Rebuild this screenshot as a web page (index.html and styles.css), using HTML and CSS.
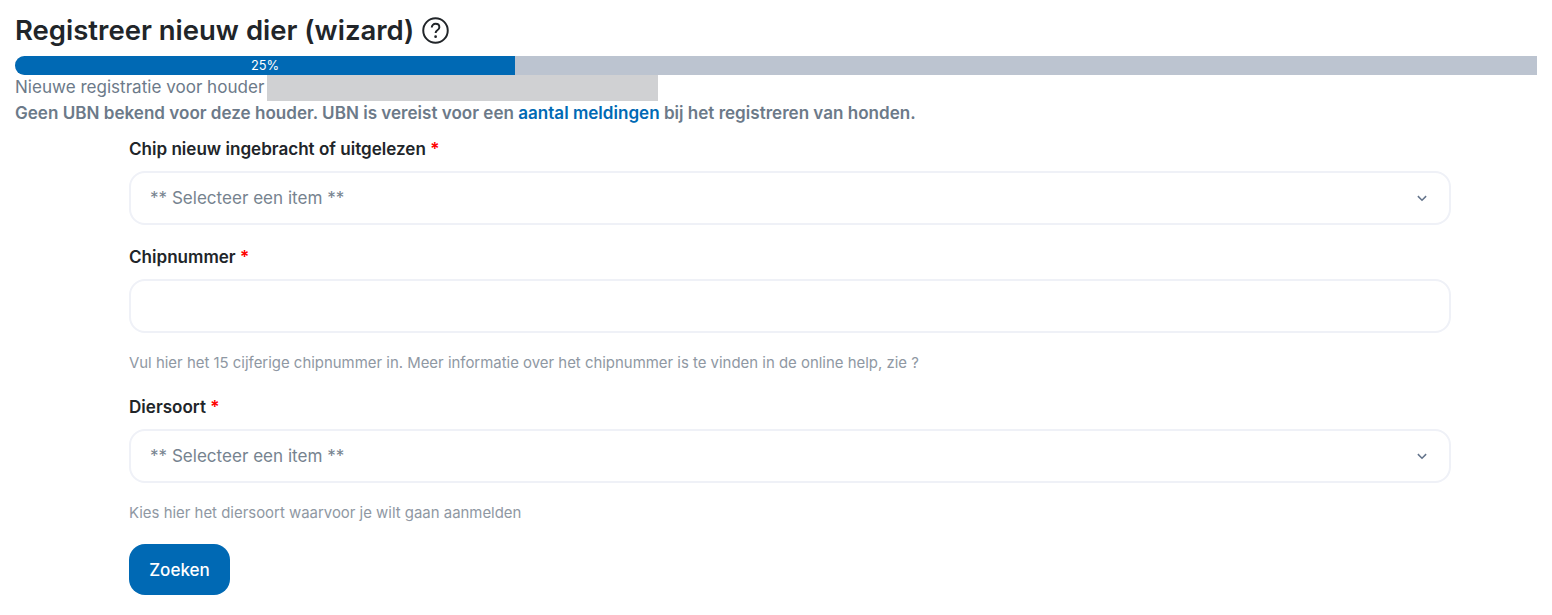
FILE: index.html
```html
<!DOCTYPE html>
<html lang="nl">
<head>
<meta charset="utf-8">
<title>Registreer nieuw dier (wizard)</title>
<link rel="stylesheet" href="styles.css">
</head>
<body>
<main class="page">
  <h1 class="title">Registreer nieuw dier (wizard)
    <svg class="help" viewBox="0 0 26 26" width="27" height="27" aria-hidden="true">
      <circle cx="13" cy="13" r="11.8" fill="none" stroke="#212529" stroke-width="1.9"/>
      <path d="M9.4 10.2c0-2.2 1.6-3.6 3.7-3.6 2.1 0 3.6 1.3 3.6 3.2 0 1.5-.8 2.3-1.9 3-1.1.7-1.7 1.3-1.7 2.7" fill="none" stroke="#212529" stroke-width="1.9"/>
      <circle cx="13.1" cy="18.9" r="1.3" fill="#212529"/>
    </svg>
  </h1>
  <div class="progress"><div class="progress-bar">25%</div></div>
  <div class="holder">Nieuwe registratie voor houder<span class="redacted"></span></div>
  <p class="notice">Geen UBN bekend voor deze houder. UBN is vereist voor een <a href="#">aantal meldingen</a> bij het registreren van honden.</p>
  <form class="form">
    <div class="field">
      <label class="label">Chip nieuw ingebracht of uitgelezen <span class="req">*</span></label>
      <div class="control select">** Selecteer een item **
        <svg class="chev" viewBox="0 0 16 16" width="12" height="12" aria-hidden="true"><path d="M2.5 5.5 8 11l5.5-5.5" fill="none" stroke="#64748b" stroke-width="2"/></svg>
      </div>
    </div>
    <div class="field">
      <label class="label">Chipnummer <span class="req">*</span></label>
      <div class="control"></div>
      <div class="hint">Vul hier het 15 cijferige chipnummer in. Meer informatie over het chipnummer is te vinden in de online help, zie ?</div>
    </div>
    <div class="field">
      <label class="label">Diersoort <span class="req">*</span></label>
      <div class="control select">** Selecteer een item **
        <svg class="chev" viewBox="0 0 16 16" width="12" height="12" aria-hidden="true"><path d="M2.5 5.5 8 11l5.5-5.5" fill="none" stroke="#64748b" stroke-width="2"/></svg>
      </div>
      <div class="hint">Kies hier het diersoort waarvoor je wilt gaan aanmelden</div>
    </div>
    <button class="btn" type="button">Zoeken</button>
  </form>
</main>
</body>
</html>
```
FILE: styles.css
```css
* { box-sizing: border-box; }
html, body { margin: 0; background: #fff; }
body { font-family: Inter, "Liberation Sans", sans-serif; color: #212529; overflow: hidden; }
.page { padding: 13px 15px 0; height: 615px; }
.title { display: flex; align-items: center; gap: 8px; margin: 0; font-size: 27.5px; font-weight: 600; line-height: 34px; height: 43px; padding-bottom: 9px; }
.help { flex: none; }
.progress { height: 19px; background: #bcc4d0; border-radius: 10px 0 0 10px; overflow: hidden; }
.progress-bar { width: 500px; height: 100%; background: #0069b4; color: #fff; font-size: 12.8px; line-height: 19px; text-align: center; }
.holder { display: flex; height: 26px; align-items: center; font-size: 17.07px; line-height: 24px; padding-bottom: 2px; color: #6c7a89; }
.redacted { display: block; width: 391px; height: 26px; margin: 2px 0 0 3px; background: #d0d1d3; }
.notice { margin: 0; font-size: 17.07px; font-weight: 600; line-height: 24px; color: #6c7a89; }
.notice a { color: #0069b4; text-decoration: none; }
.form { margin: 0 86px 0 114px; padding-top: 12px; }
.field { margin-bottom: 20px; }
.field:last-of-type { margin-bottom: 0; }
.label { display: block; font-size: 17.07px; font-weight: 600; line-height: 24px; margin-bottom: 10px; color: #212529; }
.req { color: #f00; }
.control { height: 54px; border: 2px solid #eff1f7; border-radius: 16px; background: #fff; }
.select { display: flex; align-items: center; justify-content: space-between; padding: 0 21px 2px 19px; font-size: 17.07px; color: #76838f; }
.chev { flex: none; margin-top: 2px; }
.hint { margin-top: 20px; padding-bottom: 1px; font-size: 14.93px; line-height: 21px; color: #8f98a3; }
.btn { display: block; width: 101px; height: 51px; margin-top: 19px; border: 0; border-radius: 16px; background: #0069b4; color: #fff; font: 500 17.07px Inter, "Liberation Sans", sans-serif; }
```
